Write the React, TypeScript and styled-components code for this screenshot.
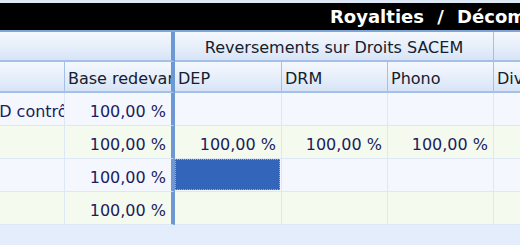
import React from 'react'
import styled, { createGlobalStyle, css } from 'styled-components'

const GlobalStyle = createGlobalStyle`
  html, body {
    margin: 0;
    padding: 0;
    background: #e3edfb;
    font-family: "DejaVu Sans", "Liberation Sans", sans-serif;
  }
`

const COLS = '65px 110px 107px 106px 106px 106px'

const Page = styled.div`
  width: 520px;
  height: 245px;
  overflow: hidden;
  background: #e3edfb;
`

const TopStrip = styled.div`
  height: 3px;
  background: #dfe8f5;
`

const TitleBar = styled.div`
  height: 27px;
  background: #000;
  color: #fff;
  font-size: 18px;
  font-weight: bold;
  line-height: 28px;
  word-spacing: 7px;
  padding-left: 330px;
  white-space: nowrap;
  overflow: hidden;
`

const Grid = styled.div`
  display: grid;
  grid-template-columns: ${COLS};
  width: 600px;
`

const headerBg = css`
  background: linear-gradient(to bottom, #f4f8fe 0%, #e6eefa 55%, #d7e4f7 100%);
  color: #15202e;
`

const GroupRow = styled(Grid)`
  border-top: 2px solid #7fa4d8;
`

interface GroupCellProps {
  $span: number;
  $thick?: boolean;
}

const GroupCell = styled.div<GroupCellProps>`
  ${headerBg}
  grid-column: span ${(p) => p.$span};
  box-sizing: border-box;
  height: 30px;
  padding-top: 3px;
  border-bottom: 2px solid #a4c0e7;
  border-right: ${(p) => (p.$thick ? '4px solid #6d98d3' : '1px solid #a4c0e7')};
  display: flex;
  align-items: center;
  justify-content: center;
  font-size: 16px;
  white-space: nowrap;
  overflow: hidden;
`

const ColCell = styled.div<{ $thick?: boolean }>`
  ${headerBg}
  box-sizing: border-box;
  height: 31px;
  padding: 3px 0 0 3px;
  border-bottom: 2px solid #a4c0e7;
  border-right: ${(p) => (p.$thick ? '4px solid #6d98d3' : '1px solid #a4c0e7')};
  display: flex;
  align-items: center;
  font-size: 16px;
  white-space: nowrap;
  overflow: hidden;
`

interface CellProps {
  $even?: boolean;
  $thick?: boolean;
  $selected?: boolean;
}

const Cell = styled.div<CellProps>`
  box-sizing: border-box;
  height: 33px;
  padding: 4px 5px 0 4px;
  background: ${(p) => (p.$even ? '#f4fbee' : '#f4f8fe')};
  border-bottom: 1px solid #dde7f5;
  border-right: ${(p) => (p.$thick ? '4px solid #6d98d3' : '1px solid #dde7f5')};
  display: flex;
  align-items: center;
  justify-content: flex-end;
  color: #1c1c60;
  font-size: 16px;
  white-space: nowrap;
  overflow: hidden;
  position: relative;

  ${(p) => p.$selected && css`
    &::after {
      content: '';
      position: absolute;
      inset: 0 1px 1px 0;
      background: #3366bb;
      border: 1px dotted #e7a43c;
    }
  `}
`

const LabelCell = styled(Cell)`
  justify-content: flex-start;
  padding-left: 0;
`

const Clipped = styled.span`
  margin-left: -12px;
`

interface RowData {
  label: string;
  base: string;
  dep: string;
  drm: string;
  phono: string;
  selected?: boolean;
}

const rows: RowData[] = [
  { label: 'CD contrôlé', base: '100,00 %', dep: '', drm: '', phono: '' },
  { label: '', base: '100,00 %', dep: '100,00 %', drm: '100,00 %', phono: '100,00 %' },
  { label: '', base: '100,00 %', dep: '', drm: '', phono: '', selected: true },
  { label: '', base: '100,00 %', dep: '', drm: '', phono: '' },
]

const App = () => (
  <Page>
    <GlobalStyle />
    <TopStrip />
    <TitleBar>Royalties / Décomptes</TitleBar>
    <GroupRow>
      <GroupCell $span={2} $thick />
      <GroupCell $span={3}>Reversements sur Droits SACEM</GroupCell>
      <GroupCell $span={1} />
    </GroupRow>
    <Grid>
      <ColCell />
      <ColCell $thick>Base redevance</ColCell>
      <ColCell>DEP</ColCell>
      <ColCell>DRM</ColCell>
      <ColCell>Phono</ColCell>
      <ColCell>Divers</ColCell>
    </Grid>
    {rows.map((r, i) => (
      <Grid key={i}>
        <LabelCell $even={i % 2 === 1}>
          {r.label && <Clipped>{r.label}</Clipped>}
        </LabelCell>
        <Cell $even={i % 2 === 1} $thick>{r.base}</Cell>
        <Cell $even={i % 2 === 1} $selected={r.selected}>{r.dep}</Cell>
        <Cell $even={i % 2 === 1}>{r.drm}</Cell>
        <Cell $even={i % 2 === 1}>{r.phono}</Cell>
        <Cell $even={i % 2 === 1} />
      </Grid>
    ))}
  </Page>
)

export default App
